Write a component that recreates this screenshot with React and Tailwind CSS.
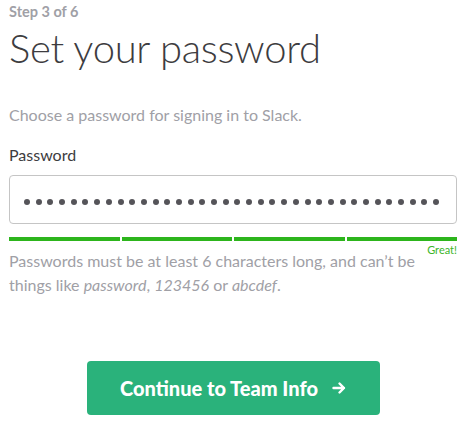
import React from 'react';

const font = { fontFamily: 'Lato, "Open Sans", sans-serif' };

const StrengthMeter = () => (
  <div className="mt-[13px]">
    <div className="grid grid-cols-4 gap-[2px]">
      <div className="h-[4px] bg-[#2db51c]" />
      <div className="h-[4px] bg-[#2db51c]" />
      <div className="h-[4px] bg-[#2db51c]" />
      <div className="h-[4px] bg-[#2db51c]" />
    </div>
    <div className="text-right text-[11px] leading-[14px] text-[#3bb52a] mt-[2px]">Great!</div>
  </div>
);

// masked password dots
const PasswordDots = () => (
  <div className="flex-1 mr-[13px] overflow-hidden pt-[5px]">
    <div className="flex gap-[5.7px] w-max">
      {Array.from({ length: 40 }).map((_, i) => (
        <span key={i} className="block w-[6px] h-[6px] rounded-full bg-[#555459]" />
      ))}
    </div>
  </div>
);

export default function App() {
  return (
    <div className="bg-white w-[469px] h-[423px] overflow-hidden" style={font}>
      <div className="pl-[9px] w-[457px]">
        <div className="text-[14.5px] font-bold text-[#a0a0a6] leading-[20px] pt-[2px]">Step 3 of 6</div>
        <h1 className="text-[40px] font-light text-[#3d3c40] leading-[52px] tracking-[-0.3px]">Set your password</h1>
        <p className="text-[16px] text-[#a0a0a6] mt-[30px] leading-[22px]">Choose a password for signing in to Slack.</p>
        <label className="block text-[16px] text-[#3d3c40] mt-[18px] leading-[22px]">Password</label>
        <div className="mt-[9px] h-[49px] border border-[#c5c5c5] rounded-[4px] flex items-center pl-[14px] overflow-hidden">
          <PasswordDots />
        </div>
        <StrengthMeter />
        <p className="text-[16px] text-[#a0a0a6] leading-[24px] -mt-[8px] pr-[36px]">
          Passwords must be at least 6 characters long, and can’t be things like{' '}
          <em>password</em>, <em>123456</em> or <em>abcdef</em>.
        </p>
        <div className="flex justify-center mt-[64px]">
          <button className="w-[293px] h-[54px] bg-[#2ab27b] rounded-[4px] text-white font-black text-[20px] flex items-center justify-center gap-[14px]">
            <span>Continue to Team Info</span>
            <svg width="14" height="14" viewBox="0 0 14 14" fill="none" stroke="white" strokeWidth="2.4" strokeLinecap="round" strokeLinejoin="round">
              <path d="M1.5 7h10.5M7.5 2.5 12 7l-4.5 4.5" />
            </svg>
          </button>
        </div>
      </div>
    </div>
  );
}
